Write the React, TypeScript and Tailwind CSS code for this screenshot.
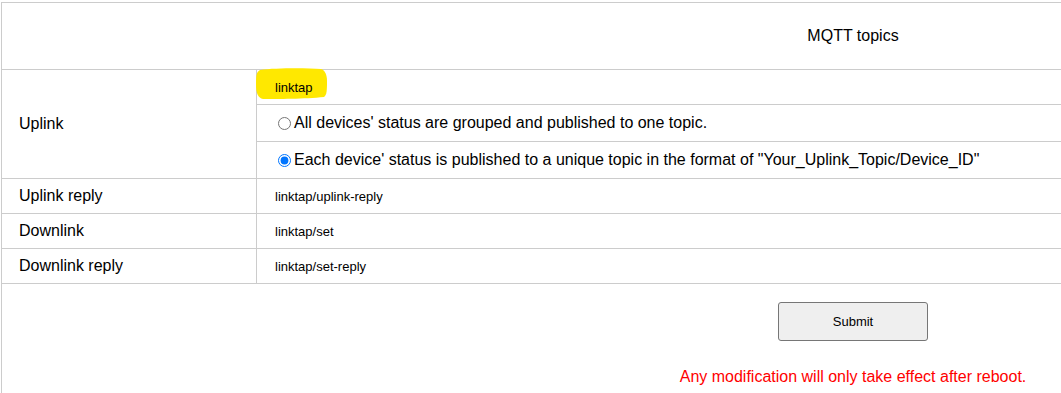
import React from "react";

const font = { fontFamily: '"Liberation Sans", Arial, sans-serif' };

function Row({ label, value }: { label: string; value: string }) {
  return (
    <div className="flex h-[35px] border-b border-[#cccccc]">
      <div className="w-[255px] shrink-0 border-r border-[#cccccc] pl-[17px] flex items-center text-[16px] text-black">
        {label}
      </div>
      <div className="flex-1 pl-[18px] flex items-center text-[13px] text-black pt-[1px]">{value}</div>
    </div>
  );
}

export default function App() {
  return (
    <div className="w-[1061px] h-[393px] overflow-hidden bg-white" style={font}>
      <div className="pt-[2px] pl-[1px]">
        <div className="w-[1703px] border-l border-t border-[#cccccc]">
          <div className="h-[67px] border-b border-[#cccccc] flex items-center justify-center text-[16px] text-black">
            MQTT topics
          </div>
          <div className="flex border-b border-[#cccccc]">
            <div className="w-[255px] shrink-0 border-r border-[#cccccc] pl-[17px] flex items-center text-[16px] text-black">
              Uplink
            </div>
            <div className="flex-1 flex flex-col">
              <div className="relative h-[35px] border-b border-[#cccccc] pl-[18px] flex items-center text-[13px] text-black pt-[1px]">
                <svg
                  className="absolute left-[-2px] top-[-3px]"
                  width="74"
                  height="34"
                  viewBox="0 0 74 34"
                >
                  <path
                    d="M5 3 C 20 1, 50 1, 66 2 C 70 3, 72 8, 72 14 C 72 22, 72 28, 69 30 C 50 32, 22 32, 8 32 C 3 31, 1 26, 1 18 C 1 10, 1 5, 5 3 Z"
                    fill="#ffe800"
                  />
                </svg>
                <span className="relative">linktap</span>
              </div>
              <label className="h-[37px] border-b border-[#cccccc] pl-[21px] flex items-center text-[16px] text-black">
                <input type="radio" name="uplink" className="m-0 mr-[3px] w-[13px] h-[13px]" readOnly />
                All devices' status are grouped and published to one topic.
              </label>
              <label className="h-[36px] pl-[21px] flex items-center text-[16px] text-black">
                <input
                  type="radio"
                  name="uplink"
                  className="m-0 mr-[3px] w-[13px] h-[13px]"
                  defaultChecked
                />
                Each device' status is published to a unique topic in the format of "Your_Uplink_Topic/Device_ID"
              </label>
            </div>
          </div>
          <Row label="Uplink reply" value="linktap/uplink-reply" />
          <Row label="Downlink" value="linktap/set" />
          <Row label="Downlink reply" value="linktap/set-reply" />
          <div className="h-[140px] flex flex-col items-center pt-[18px]">
            <button className="w-[150px] h-[39px] bg-[#efefef] border border-[#767676] rounded-[3px] text-[13px] text-black">
              Submit
            </button>
            <div className="mt-[24px] text-[16px] text-[#ff0000]">
              Any modification will only take effect after reboot.
            </div>
          </div>
        </div>
      </div>
    </div>
  );
}
